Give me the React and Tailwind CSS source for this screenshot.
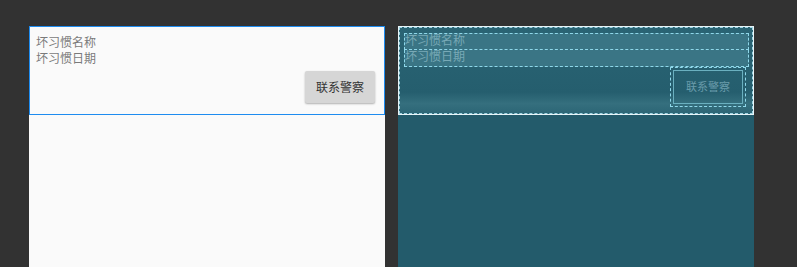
export default function App() {
    const cjk = { fontFamily: '"Noto Sans CJK SC", "Noto Sans", sans-serif' };
    const serif = { fontFamily: '"Liberation Serif", "Noto Sans CJK SC", serif' };

    return (
        <div className="w-[797px] h-[267px] bg-[#323232] flex gap-[13px] pl-[29px] pt-[26px] overflow-hidden">
            {/* Design view */}
            <div className="w-[356px] h-full bg-[#fafafa] flex flex-col">
                <div className="h-[89px] border border-[#1e8cf0] flex flex-col pl-[6px] pr-[9px] pt-[7px]" style={cjk}>
                    <div className="h-[16px] leading-[16px] text-[12px] text-[#7a7a7a]">坏习惯名称</div>
                    <div className="h-[16px] leading-[16px] text-[12px] text-[#7a7a7a]">坏习惯日期</div>
                    <button
                        type="button"
                        className="self-end mt-[5px] w-[70px] h-[32px] bg-[#d6d6d6] rounded-[2px] shadow-[0_1px_2px_rgba(0,0,0,0.3)] text-[12px] text-[#333]"
                    >
                        联系警察
                    </button>
                </div>
            </div>

            {/* Blueprint view */}
            <div className="w-[356px] h-full bg-[#235b6b] flex flex-col">
                <div className="h-[89px] border border-[#e8f4f8] outline outline-1 outline-dashed outline-[#9fd6e4] -outline-offset-2 bg-[linear-gradient(to_bottom,#2a6474_0%,#255e6e_75%,#356f7e_88%,#2b6575_100%)] flex flex-col pl-[5px] pr-[4px] pt-[6px]" style={serif}>
                    <div className="h-[17px] leading-[15px] text-[12px] text-[#78a9b6] border border-dashed border-[#8fd8ea] bg-[#3a7585]">坏习惯名称</div>
                    <div className="h-[17px] leading-[15px] text-[12px] text-[#78a9b6] border border-dashed border-[#8fd8ea] border-t-0 bg-[#3a7585]">坏习惯日期</div>
                    <div className="self-end mr-[3px] w-[76px] h-[40px] border border-dashed border-[#8fd8ea] p-[2px]">
                        <div className="w-full h-full border border-[#6ab0c0] flex items-center justify-center text-[11px] text-[#6a9cab]">
                            联系警察
                        </div>
                    </div>
                </div>
            </div>
        </div>
    );
}
